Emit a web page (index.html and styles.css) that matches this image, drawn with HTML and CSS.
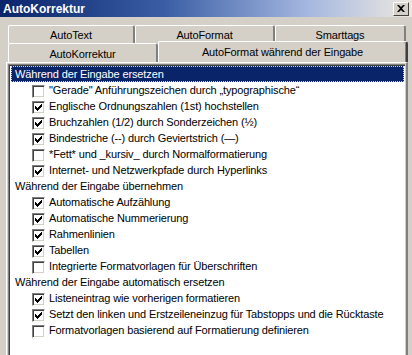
FILE: index.html
```html
<!DOCTYPE html>
<html lang="de">
<head>
    <meta charset="UTF-8">
    <meta name="viewport" content="width=device-width, initial-scale=1.0">
    <title>AutoKorrektur</title>
    <link rel="stylesheet" href="styles.css">
</head>
<body>
    <div class="window">
        <div class="titlebar">
            <span class="title">AutoKorrektur</span>
            <span class="close">
                <svg width="8" height="7" viewBox="0 0 8 7"><path d="M0 0h2l2 2 2-2h2L5 3.5 8 7H6L4 5 2 7H0l3-3.5z" fill="#000"/></svg>
            </span>
        </div>

        <div class="tabs">
            <div class="tabrow">
                <div class="tab t-text">AutoText</div>
                <div class="tab t-format">AutoFormat</div>
                <div class="tab t-smart">Smarttags</div>
            </div>
            <div class="tabrow front">
                <div class="tab t-korr">AutoKorrektur</div>
                <div class="tab t-active">AutoFormat während der Eingabe</div>
            </div>
        </div>

        <div class="panel">
            <ul class="list">
                <li class="head selected">Während der Eingabe ersetzen</li>
                <li class="item"><span class="box"></span>"Gerade" Anführungszeichen durch „typographische“</li>
                <li class="item"><span class="box on"></span>Englische Ordnungszahlen (1st) hochstellen</li>
                <li class="item"><span class="box on"></span>Bruchzahlen (1/2) durch Sonderzeichen (½)</li>
                <li class="item"><span class="box on"></span>Bindestriche (--) durch Geviertstrich (—)</li>
                <li class="item"><span class="box"></span>*Fett* und _kursiv_ durch Normalformatierung</li>
                <li class="item"><span class="box on"></span>Internet- und Netzwerkpfade durch Hyperlinks</li>
                <li class="head">Während der Eingabe übernehmen</li>
                <li class="item"><span class="box on"></span>Automatische Aufzählung</li>
                <li class="item"><span class="box on"></span>Automatische Nummerierung</li>
                <li class="item"><span class="box on"></span>Rahmenlinien</li>
                <li class="item"><span class="box on"></span>Tabellen</li>
                <li class="item"><span class="box"></span>Integrierte Formatvorlagen für Überschriften</li>
                <li class="head">Während der Eingabe automatisch ersetzen</li>
                <li class="item"><span class="box on"></span>Listeneintrag wie vorherigen formatieren</li>
                <li class="item"><span class="box on"></span>Setzt den linken und Erstzeileneinzug für Tabstopps und die Rücktaste</li>
                <li class="item"><span class="box"></span>Formatvorlagen basierend auf Formatierung definieren</li>
            </ul>
        </div>
    </div>
</body>
</html>
```

FILE: styles.css
```css
body {
    margin: 0;
    font-family: "Liberation Sans", Arial, sans-serif;
    font-size: 11px;
    letter-spacing: -0.13px;
    color: #000;
    background-color: #d4d0c8;
}

.window {
    width: 412px;
    height: 355px;
    overflow: hidden;
    background-color: #d4d0c8;
}

.titlebar {
    height: 17px;
    display: flex;
    align-items: center;
    justify-content: space-between;
    padding: 0 2px 0 3px;
    background: linear-gradient(to right, #0a246a 0%, #3a5ea5 40%, #a6b8e0 75%, #ece8e0 100%);
}

.title {
    color: #fff;
    font-weight: bold;
    font-size: 12px;
    letter-spacing: 0;
}

.close {
    width: 14px;
    height: 12px;
    display: flex;
    align-items: center;
    justify-content: center;
    background-color: #d4d0c8;
    border-top: 1px solid #fff;
    border-left: 1px solid #fff;
    border-right: 1px solid #404040;
    border-bottom: 1px solid #404040;
    margin-right: 1px;
}

.tabs {
    padding: 8px 4px 0 8px;
}

.tabrow {
    display: flex;
    height: 18px;
}

.tabrow.front {
    height: 19px;
}

.tab {
    box-sizing: border-box;
    display: flex;
    align-items: center;
    justify-content: center;
    background-color: #d4d0c8;
    border-top: 1px solid #fff;
    border-left: 1px solid #fff;
    border-right: 2px solid #808080;
    border-top-left-radius: 2px;
    border-top-right-radius: 3px;
    box-shadow: inset -1px 0 0 #d4d0c8;
    padding-top: 1px;
}

.t-text { width: 127px; }
.t-format { width: 140px; }
.t-smart { width: 131px; }
.t-korr { width: 150px; }

.t-active {
    width: 250px;
    height: 21px;
    margin-top: -2px;
    position: relative;
    z-index: 1;
    border-right-color: #404040;
    box-shadow: inset -1px 0 0 #808080;
    padding-top: 0;
}

.panel {
    margin: 0 4px 0 6px;
    border-top: 1px solid #fff;
    border-left: 1px solid #fff;
    border-right: 2px solid #808080;
    padding: 1px 1px 0 1px;
    height: 300px;
}

.list {
    list-style: none;
    margin: 0;
    padding: 1px 1px 0 1px;
    height: 300px;
    background-color: #fff;
    border-top: 1px solid #808080;
    border-left: 1px solid #808080;
    box-shadow: inset 1px 1px 0 #404040;
}

.list li {
    height: 16px;
    display: flex;
    align-items: center;
    white-space: nowrap;
}

.head {
    box-sizing: border-box;
    padding-left: 4px;
    margin-left: 1px;
}

.head.selected {
    background-color: #0a246a;
    color: #fff;
    border: 1px dotted #e8d890;
    padding-left: 3px;
}

.item {
    padding-left: 22px;
}

.box {
    box-sizing: border-box;
    width: 13px;
    height: 13px;
    margin-right: 4px;
    flex: none;
    background-color: #fff;
    border-top: 1px solid #808080;
    border-left: 1px solid #808080;
    border-right: 1px solid #fff;
    border-bottom: 1px solid #fff;
    box-shadow: inset 1px 1px 0 #404040, inset -1px -1px 0 #d4d0c8;
    position: relative;
    top: 1px;
}

.box.on {
    background-image: url("data:image/svg+xml,%3Csvg xmlns='http://www.w3.org/2000/svg' width='11' height='11' viewBox='0 0 11 11'%3E%3Cpath d='M2 4h1v1h1v1h1V5h1V4h1V3h1V2h1v3H8v1H7v1H6v1H5v1H4V8H3V7H2z' fill='%23000'/%3E%3C/svg%3E");
    background-repeat: no-repeat;
    background-position: 0 0;
}
```
